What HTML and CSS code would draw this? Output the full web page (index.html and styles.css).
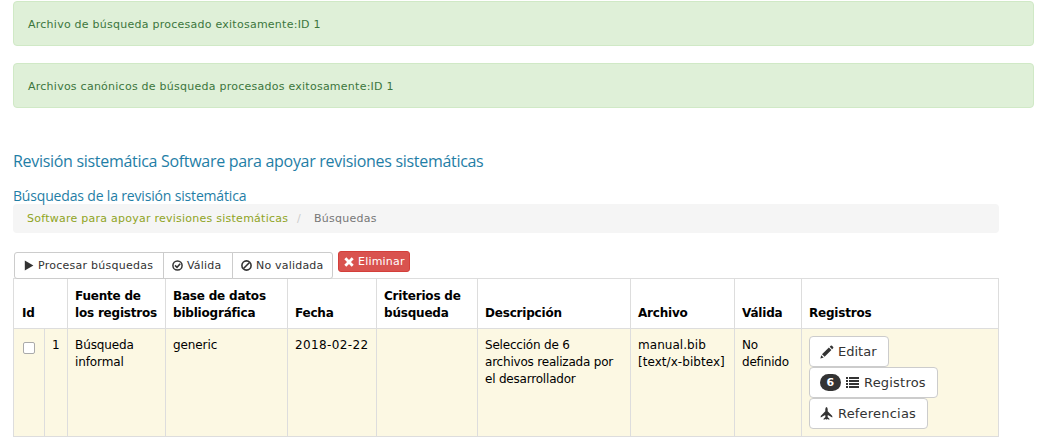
FILE: index.html
```html
<!DOCTYPE html>
<html lang="es">
<head>
<meta charset="utf-8">
<title>Búsquedas</title>
<link rel="stylesheet" href="styles.css">
</head>
<body>
<div class="alert">Archivo de búsqueda procesado exitosamente:ID 1</div>
<div class="alert">Archivos canónicos de búsqueda procesados exitosamente:ID 1</div>
<main class="content">
  <h1 class="title">Revisión sistemática Software para apoyar revisiones sistemáticas</h1>
  <h2 class="subtitle">Búsquedas de la revisión sistemática</h2>
  <nav class="breadcrumb"><a class="crumb-link">Software para apoyar revisiones sistemáticas</a><span class="sep">/</span><span class="current">Búsquedas</span></nav>
  <div class="toolbar">
    <div class="group">
      <button class="btn b1"><svg class="ic" width="10" height="11" viewBox="0 0 10 11"><path d="M.8.6 9.4 5.5.8 10.4z"/></svg><span>Procesar búsquedas</span></button>
      <button class="btn b2"><svg class="ic" width="11" height="11" viewBox="0 0 11 11"><circle cx="5.5" cy="5.5" r="4.6" fill="none" stroke="#333" stroke-width="1.5"/><path d="M3 5.4 5 7.3 8.2 3.7" fill="none" stroke="#333" stroke-width="1.6"/></svg><span>Válida</span></button>
      <button class="btn b3"><svg class="ic" width="11" height="11" viewBox="0 0 11 11"><circle cx="5.5" cy="5.5" r="4.6" fill="none" stroke="#333" stroke-width="1.6"/><path d="M2.5 8.5 8.5 2.5" stroke="#333" stroke-width="1.6"/></svg><span>No validada</span></button>
    </div>
    <button class="btn danger"><svg class="ic" width="10" height="10" viewBox="0 0 10 10"><path d="M1.3 1.3 8.7 8.7M8.7 1.3 1.3 8.7" stroke="#fff" stroke-width="2.8"/></svg><span>Eliminar</span></button>
  </div>
  <table class="grid">
    <colgroup><col class="c1"><col class="c2"><col class="c3"><col class="c4"><col class="c5"><col class="c6"><col class="c7"><col class="c8"><col class="c9"><col class="c10"></colgroup>
    <thead><tr>
      <th colspan="2" class="idh">Id</th><th>Fuente de<br>los registros</th><th>Base de datos<br>bibliográfica</th><th>Fecha</th><th>Criterios de<br>búsqueda</th><th>Descripción</th><th>Archivo</th><th>Válida</th><th>Registros</th>
    </tr></thead>
    <tbody><tr>
      <td class="check"><input type="checkbox" class="box"></td><td>1</td><td>Búsqueda<br>informal</td><td>generic</td><td class="date">2018-02-22</td><td></td><td class="desc">Selección de 6<br>archivos realizada por<br>el desarrollador</td><td class="file">manual.bib<br>[text/x-bibtex]</td><td class="desc">No<br>definido</td>
      <td class="actions"><div class="stack">
        <button class="act a1"><svg class="ic" width="14" height="14" viewBox="0 0 14 14"><path d="M.4 13.4 1.2 10.2 3.7 12.6zM2 9.3 8.9 2.5 11.4 5 4.6 11.8zM9.7 1.8 10.7.8Q11.3.3 12 .8L13.2 2Q13.6 2.6 13.1 3.2L12.1 4.2z"/></svg><span>Editar</span></button>
        <button class="act a2"><b class="badge">6</b><svg class="ic" width="13" height="12" viewBox="0 0 13 12"><path d="M0 0h2v2H0zM3 0h10v2H3zM0 3h2v2H0zM3 3h10v2H3zM0 6h2v2H0zM3 6h10v2H3zM0 9h2v2H0zM3 9h10v2H3z"/></svg><span>Registros</span></button>
        <button class="act a3"><svg class="ic" width="13" height="13" viewBox="0 0 13 13"><path d="M6.5 0Q7.6.6 7.7 2.2V4.2L12.3 9V10.6L7.8 8 7.6 10 9.4 11.7V12.7L7 12 6.5 13 6 12 3.6 12.7V11.7L5.4 10 5.2 8 .7 10.6V9L5.3 4.2V2.2Q5.4.6 6.5 0z"/></svg><span>Referencias</span></button>
      </div></td>
    </tr></tbody>
  </table>
</main>
</body>
</html>
```
FILE: styles.css
```css
* { box-sizing: border-box; }
body {
  margin: 0;
  padding: 1px 13px 0;
  background: #fff;
  color: #000;
  font-family: "DejaVu Sans", sans-serif;
  font-size: 12px;
  overflow: hidden;
}
.alert {
  width: 1021px;
  height: 45px;
  margin-bottom: 17px;
  padding: 14px;
  border: 1px solid #d0e9c6;
  border-radius: 4px;
  background: #dff0d8;
  color: #3c763d;
  font-size: 11px;
  line-height: 17px;
  letter-spacing: 0.25px;
  white-space: nowrap;
}
.content { width: 986px; padding-top: 25px; }
.title, .subtitle {
  margin: 0;
  color: #1f7ea6;
  font-family: "Open Sans", sans-serif;
  font-weight: 400;
  white-space: nowrap;
}
.title { height: 37px; font-size: 16px; line-height: 22px; letter-spacing: -0.3px; }
.subtitle { height: 17px; font-size: 14px; line-height: 17px; letter-spacing: -0.17px; }
.breadcrumb {
  display: flex;
  height: 29px;
  padding-left: 14px;
  border-radius: 4px;
  background: #f5f5f5;
  font-size: 11px;
  line-height: 30px;
  letter-spacing: 0.25px;
}
.crumb-link { width: 270px; color: #8fa41e; white-space: nowrap; }
.sep { width: 17px; color: #ccc; }
.current { color: #777; }
.toolbar {
  display: flex;
  height: 45px;
  padding: 18px 0 0 1px;
}
.group { display: flex; margin-top: 1px; height: 27px; }
.btn {
  display: flex;
  align-items: center;
  gap: 4px;
  padding: 0 0 0 8px;
  border: 1px solid #ccc;
  background: #fff;
  color: #333;
  font: 11px "DejaVu Sans", sans-serif;
  letter-spacing: 0.2px;
  white-space: nowrap;
}
.ic { flex: none; fill: #333; }
.b1 { width: 150px; border-radius: 3px 0 0 3px; padding-left: 9px; letter-spacing: 0.25px; }
.b2 { width: 70px; margin-left: -1px; }
.b3 { width: 101px; margin-left: -1px; border-radius: 0 3px 3px 0; }
.danger {
  width: 72px;
  height: 21px;
  margin-left: 5px;
  padding-left: 5px;
  border-color: #d43f3a;
  border-radius: 3px;
  background: #d9534f;
  color: #fff;
}
.grid {
  width: 986px;
  table-layout: fixed;
  border-collapse: separate;
  border-spacing: 0;
  border-top: 1px solid #ddd;
  border-left: 1px solid #ddd;
  line-height: 17px;
}
.grid th, .grid td {
  padding: 8px 0 0 7px;
  border-right: 1px solid #ddd;
  border-bottom: 1px solid #ddd;
  text-align: left;
  vertical-align: top;
  white-space: nowrap;
}
.grid th { height: 50px; padding: 7px 0 6px 7px; vertical-align: bottom; letter-spacing: -0.2px; }
.grid .idh { padding-left: 8px; }
.grid td { height: 108px; background: #fcf8e3; letter-spacing: -0.1px; }
.grid .date { letter-spacing: 0.38px; }
.grid .desc { letter-spacing: -0.2px; }
.grid .file { letter-spacing: 0.05px; }
.grid .actions { padding-top: 7px; }
.c1 { width: 31px; }
.c2 { width: 23px; }
.c3 { width: 98px; }
.c4 { width: 122px; }
.c5 { width: 89px; }
.c6 { width: 101px; }
.c7 { width: 153px; }
.c8 { width: 104px; }
.c9 { width: 67px; }
.c10 { width: 197px; }
.grid .check { padding: 13px 0 0 9px; line-height: 0; }
.box {
  appearance: none;
  width: 12px;
  height: 12px;
  margin: 0;
  border: 1px solid #aaa;
  border-radius: 2px;
  background: #fff;
}
.stack { display: flex; flex-direction: column; align-items: flex-start; }
.act {
  display: flex;
  align-items: center;
  height: 31px;
  padding: 0 0 0 10px;
  border: 1px solid #ccc;
  border-radius: 4px;
  background: #fff;
  color: #333;
  font: 13px "DejaVu Sans", sans-serif;
  letter-spacing: 0.2px;
  white-space: nowrap;
  gap: 5px;
}
.a1 { width: 80px; gap: 4px; letter-spacing: 0; }
.a2 { width: 129px; }
.a3 { width: 119px; }
.badge {
  width: 21px;
  height: 17px;
  border-radius: 9px;
  background: #333;
  color: #fff;
  font-size: 11px;
  line-height: 17px;
  text-align: center;
}
```
